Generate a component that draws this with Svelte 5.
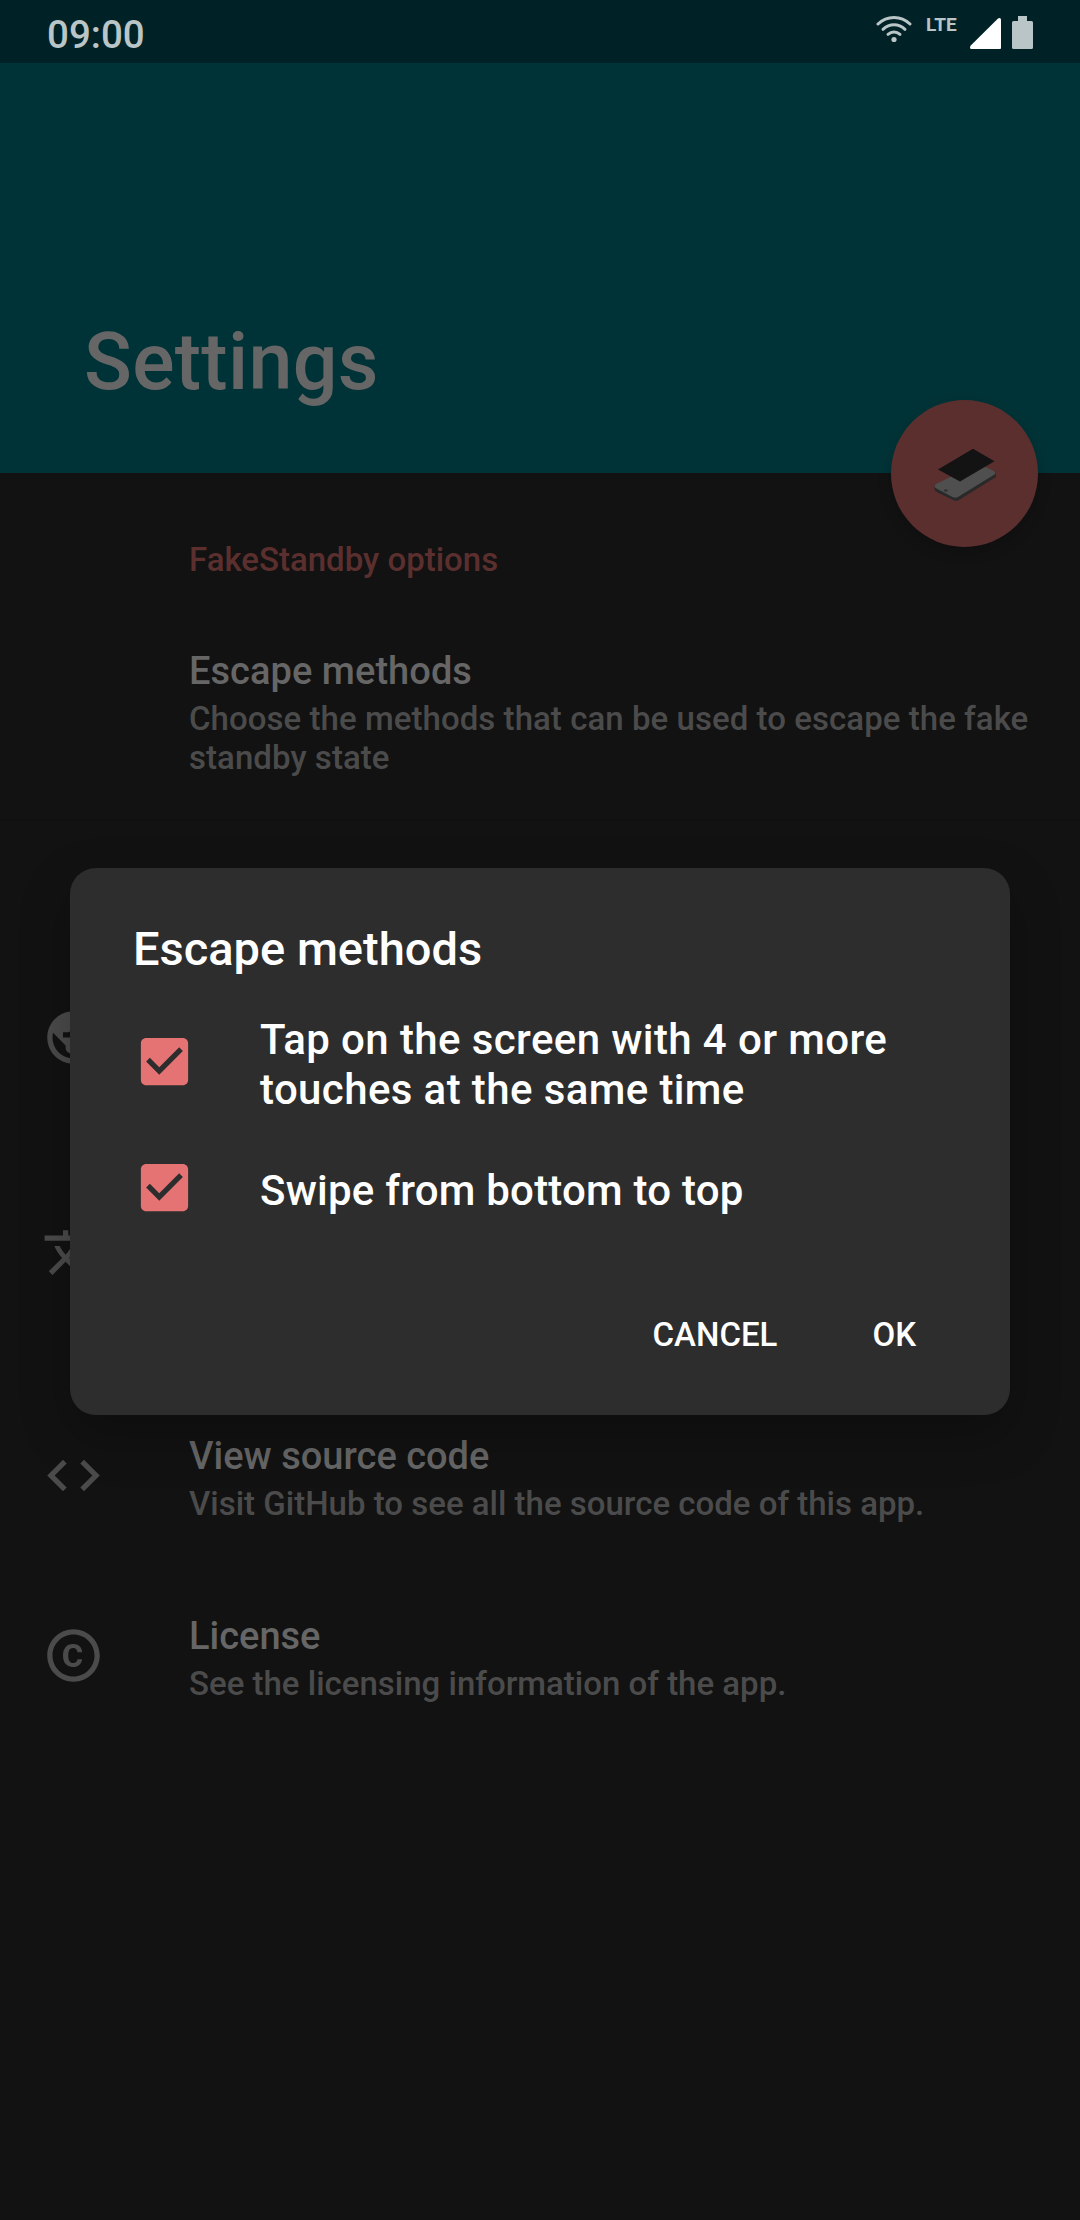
<script>
  const globe = 'M12 2C6.48 2 2 6.48 2 12s4.48 10 10 10 10-4.48 10-10S17.52 2 12 2zm-1 17.93c-3.95-.49-7-3.85-7-7.93 0-.62.08-1.21.21-1.79L9 15v1c0 1.1.9 2 2 2v1.93zm6.9-2.54c-.26-.81-1-1.39-1.9-1.39h-1v-3c0-.55-.45-1-1-1H8v-2h2c.55 0 1-.45 1-1V7h2c1.1 0 2-.9 2-2v-.41c2.93 1.19 5 4.06 5 7.41 0 2.08-.8 3.97-2.1 5.39z';
  const translate = 'M12.87 15.07l-2.54-2.51.03-.03c1.74-1.94 2.98-4.17 3.71-6.53H17V4h-7V2H8v2H1v1.99h11.17C11.5 7.92 10.44 9.75 9 11.35 8.07 10.32 7.3 9.19 6.69 8h-2c.73 1.63 1.73 3.17 2.98 4.56l-5.09 5.02L4 19l5-5 3.11 3.11.76-2.04zM18.5 10h-2L12 22h2l1.12-3h4.75L21 22h2l-4.5-12zm-2.62 7l1.62-4.33L19.12 17h-3.24z';
  const code = 'M9.4 16.6L4.8 12l4.6-4.6L8 6l-6 6 6 6 1.4-1.4zm5.2 0l4.6-4.6-4.6-4.6L16 6l6 6-6 6-1.4-1.4z';
  const copyright = 'M10.08 10.86c.05-.33.16-.62.3-.87s.34-.46.59-.62c.24-.15.54-.22.91-.23.23.01.44.05.63.13.2.09.38.21.52.36s.25.33.34.53.13.42.14.64h1.79c-.02-.47-.11-.9-.28-1.29s-.4-.73-.7-1.01-.66-.5-1.08-.66-.88-.23-1.39-.23c-.65 0-1.22.11-1.7.34s-.88.53-1.2.92-.56.84-.71 1.36S8 11.29 8 11.87v.27c0 .58.08 1.12.23 1.64s.39.97.71 1.35.72.69 1.2.91 1.05.34 1.7.34c.47 0 .91-.08 1.32-.23s.77-.36 1.08-.63.56-.58.74-.94.29-.74.3-1.15h-1.79c-.01.21-.06.4-.15.58s-.21.33-.36.46-.32.23-.52.3c-.19.07-.39.09-.6.1-.36-.01-.66-.08-.89-.23-.25-.16-.45-.37-.59-.62s-.25-.55-.3-.88-.08-.67-.08-1v-.27c0-.35.03-.68.08-1.01zM12 2C6.48 2 2 6.48 2 12s4.48 10 10 10 10-4.48 10-10S17.52 2 12 2zm0 18c-4.41 0-8-3.59-8-8s3.59-8 8-8 8 3.59 8 8-3.59 8-8 8z';

  const links = [
    { icon: code, title: 'View source code', summary: 'Visit GitHub to see all the source code of this app.' },
    { icon: copyright, title: 'License', summary: 'See the licensing information of the app.' }
  ];
  const methods = [
    { label: 'Tap on the screen with 4 or more touches at the same time', tall: true },
    { label: 'Swipe from bottom to top', tall: false }
  ];
</script>

{#snippet icon(d)}
  <svg class="icon" viewBox="0 0 24 24"><path {d} /></svg>
{/snippet}

<div class="screen">
  <div class="status">
    <span class="time">09:00</span>
    <div class="indicators">
      <svg class="wifi" viewBox="0 0 36 28">
        <g fill="none" stroke="currentColor" stroke-width="3" stroke-linecap="round">
          <path d="M2 9C11 .2 25 .2 34 9" />
          <path d="M7 14.3C13.500 8.300 22.500 8.300 29 14.300" />
          <path d="M12 19.300C15.500 16.200 20.500 16.200 24 19.300" />
        </g>
        <circle cx="18" cy="24.500" r="2.600" fill="currentColor" />
      </svg>
      <span class="lte">LTE</span>
      <svg class="signal" viewBox="0 0 31 31"><path d="M29.500 0Q31 0 31 1.500V30Q31 31 30 31H1.500Q0 31 0 29.500L.5 27.800 28 .6Q28.700 0 29.500 0Z" /></svg>
      <svg class="battery" viewBox="0 0 21 33"><path d="M6 0H15V5H19.500Q21 5 21 6.500V31.500Q21 33 19.500 33H1.500Q0 33 0 31.500V6.500Q0 5 1.500 5H6Z" /></svg>
    </div>
  </div>

  <header>
    <h1>Settings</h1>
    <div class="fab">
      <svg viewBox="-0.5 -1.5 80 70">
        <path d="M9 45L70.500 31V36.500L33.500 59.500Q31 61 28.500 60L11 51.500Q9 50.300 9 48.500Z" fill="#292929" />
        <path d="M10.500 43.500L53 23 69 31Q71 32.500 69 34L32.500 56.500Q30 58 27 56.500L11 48Q7.500 46 10.500 43.500Z" fill="#4f4f4f" />
        <ellipse cx="20.300" cy="50" rx="2" ry="1.200" fill="#333" />
        <path d="M47.500 8.300L69 20.700 34.500 41 12.500 29Z" fill="#131313" />
      </svg>
    </div>
  </header>

  <main>
    <h2>FakeStandby options</h2>
    <div class="row double">
      <div class="text first">
        <h3>Escape methods</h3>
        <p>Choose the methods that can be used to escape the fake standby state</p>
      </div>
    </div>
    <div class="about">
      <div class="row double">{@render icon(globe)}</div>
      <div class="row double">{@render icon(translate)}</div>
      {#each links as link}
        <div class="row">
          {@render icon(link.icon)}
          <div class="text">
            <h3>{link.title}</h3>
            <p>{link.summary}</p>
          </div>
        </div>
      {/each}
    </div>
  </main>

  <div class="overlay">
    <div class="dialog" role="dialog">
      <h4>Escape methods</h4>
      {#each methods as method}
        <div class="method" class:tall={method.tall}>
          <svg class="check" viewBox="0 0 24 24">
            <path fill="#e57373" d="M19 3H5c-1.110 0-2 .9-2 2v14c0 1.100.89 2 2 2h14c1.110 0 2-.9 2-2V5c0-1.100-.89-2-2-2zm-9 14l-5-5 1.410-1.410L10 14.170l7.590-7.590L19 8l-9 9z" />
          </svg>
          <span>{method.label}</span>
        </div>
      {/each}
      <div class="actions">
        <button>CANCEL</button>
        <button>OK</button>
      </div>
    </div>
  </div>
</div>

<style>
  :global(body) { background: #121212; }
  .screen {
    position: relative;
    width: 1080px;
    height: 2220px;
    overflow: hidden;
    background: #121212;
    font-family: Roboto, sans-serif;
    font-weight: 500;
  }
  h1, h2, h3, h4, p { margin: 0; font-weight: 500; }
  .status {
    display: flex;
    justify-content: space-between;
    height: 63px;
    padding: 0 47px 0 47px;
    box-sizing: border-box;
    background: #002226;
    color: #b9c5c6;
  }
  .time { font-size: 38.5px; line-height: 46px; padding-top: 12px; }
  .indicators { display: flex; align-items: flex-start; }
  .wifi { width: 36px; height: 28px; margin-top: 15px; }
  .lte { width: 31px; font-size: 19px; font-weight: 700; line-height: 22px; margin: 14px 0 0 14px; white-space: nowrap; }
  .signal { width: 31px; height: 31px; margin: 18px 0 0 13px; fill: #fff; }
  .battery { width: 21px; height: 33px; margin: 16px 0 0 11px; fill: #b9c5c6; }
  header {
    position: relative;
    height: 410px;
    padding: 253px 0 0 84px;
    box-sizing: border-box;
    background: #003337;
  }
  h1 { font-size: 79px; line-height: 92px; letter-spacing: 0.3px; color: #666; }
  .fab {
    position: absolute;
    right: 42px;
    bottom: -74px;
    width: 147px;
    height: 147px;
    border-radius: 50%;
    background: #5c2f2f;
    box-shadow: 0 5px 14px rgba(0, 0, 0, 0.18);
    display: flex;
    align-items: center;
    justify-content: center;
  }
  .fab svg { width: 80px; height: 70px; }
  main { padding-top: 67px; }
  h2 { font-size: 33px; line-height: 39px; margin: 0 0 21px 189px; color: #5c2f2f; }
  .row { display: flex; height: 180px; box-sizing: border-box; padding: 0 42px; align-items: flex-start; }
  .row.double { height: 219px; }
  .icon { width: 63px; height: 63px; margin-top: 58.5px; fill: #4b4b4b; flex: none; }
  .text { margin-left: 84px; padding-top: 49px; }
  .text.first { margin-left: 147px; letter-spacing: 0.05px; }
  h3 { font-size: 38px; line-height: 45px; color: #666; }
  p { font-size: 33px; line-height: 39px; color: #4b4b4b; padding-top: 5px; }
  .about { border-top: 2px solid #101010; padding-top: 126px; }
  .overlay { position: absolute; inset: 63px 0 0; display: flex; justify-content: center; align-items: flex-start; padding-top: 805px; }
  .dialog {
    width: 940px;
    height: 547px;
    box-sizing: border-box;
    padding: 53px 63px 0;
    border-radius: 26px;
    background: #2d2d2d;
    color: #fff;
    box-shadow: 0 20px 50px rgba(0, 0, 0, 0.25);
  }
  h4 { font-size: 47px; line-height: 55px; margin-bottom: 22px; }
  .method { display: flex; align-items: center; height: 126px; font-size: 42px; line-height: 50px; letter-spacing: 0.22px; }
  .method.tall { letter-spacing: 0.39px; }
  .method span { padding-top: 7px; }
  .check { width: 63px; height: 63px; flex: none; margin-right: 64px; }
  .actions { display: flex; justify-content: flex-end; gap: 95px; padding: 65px 31px 0 0; }
  button { border: 0; padding: 0; background: none; color: inherit; font: 500 33px/39px Roboto, sans-serif; }
</style>
